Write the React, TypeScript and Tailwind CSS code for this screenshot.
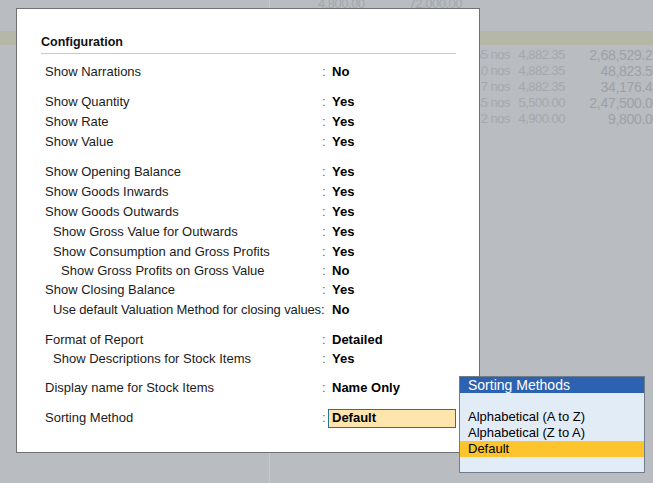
const reportRows = [
  { qty: "55 nos", rate: "4,882.35", amount: "2,68,529.25" },
  { qty: "10 nos", rate: "4,882.35", amount: "48,823.50" },
  { qty: "7 nos", rate: "4,882.35", amount: "34,176.45" },
  { qty: "45 nos", rate: "5,500.00", amount: "2,47,500.00" },
  { qty: "2 nos", rate: "4,900.00", amount: "9,800.00" },
];

type ConfigRow = { label: string; value: string; indent?: number; gap?: string; h?: string; box?: boolean; inlineColon?: boolean };

const configRows: ConfigRow[] = [
  { label: "Show Narrations", value: "No" },
  { label: "Show Quantity", value: "Yes", gap: "mt-[10px]" },
  { label: "Show Rate", value: "Yes" },
  { label: "Show Value", value: "Yes" },
  { label: "Show Opening Balance", value: "Yes", gap: "mt-[10px]" },
  { label: "Show Goods Inwards", value: "Yes" },
  { label: "Show Goods Outwards", value: "Yes" },
  { label: "Show Gross Value for Outwards", value: "Yes", indent: 1 },
  { label: "Show Consumption and Gross Profits", value: "Yes", indent: 1, h: "h-[19px]" },
  { label: "Show Gross Profits on Gross Value", value: "No", indent: 2, h: "h-[19px]" },
  { label: "Show Closing Balance", value: "Yes" },
  { label: "Use default Valuation Method for closing values:", value: "No", indent: 1, inlineColon: true },
  { label: "Format of Report", value: "Detailed", gap: "mt-[10px]", h: "h-[19px]" },
  { label: "Show Descriptions for Stock Items", value: "Yes", indent: 1 },
  { label: "Display name for Stock Items", value: "Name Only", gap: "mt-[9px]" },
  { label: "Sorting Method", value: "Default", gap: "mt-[10px]", box: true },
];

function Row({ row }: { row: ConfigRow }) {
  const indent = row.indent === 2 ? "pl-4" : row.indent === 1 ? "pl-2" : "";
  return (
    <div className={`flex items-center ${row.h ?? "h-5"} ${row.gap ?? ""}`}>
      <div
        className={`w-[277px] shrink-0 whitespace-nowrap text-[13px] text-[#1b1b1b] ${indent} ${
          row.inlineColon ? "tracking-[-0.12px]" : ""
        }`}
      >
        {row.label}
      </div>
      <div className={`${row.box ? "w-[6px]" : "w-[10px]"} shrink-0 text-[13px] text-[#666]`}>{row.inlineColon ? "" : ":"}</div>
      {row.box ? (
        <div className="flex h-[19px] w-[128px] items-center border border-[#2f7189] bg-[#fee5ae] pl-[3px] text-[13px] font-bold text-black">
          {row.value}
        </div>
      ) : (
        <div className="text-[13px] font-bold text-black">{row.value}</div>
      )}
    </div>
  );
}

function Divider() {
  return <div className="h-full w-[270px] shrink-0 border-r border-[#c6c9cd]" />;
}

export default function App() {
  return (
    <div className="relative h-[483px] w-[653px] overflow-hidden bg-[#b9bcc1] font-['Liberation_Sans',Arial,sans-serif]">
      {/* dimmed report behind the dialog */}
      <div className="flex flex-col text-[13px] tracking-[-0.5px] text-[#a4a8ad]">
        <div className="-mt-[4px] flex h-4 items-center leading-4">
          <Divider />
          <span className="w-[12px] shrink-0" />
          <span className="w-[36px] shrink-0">15 nos</span>
          <span className="w-[50px] shrink-0">4,800.00</span>
          <span className="w-[94px] shrink-0 text-right">72,000.00</span>
        </div>
        <div className="flex h-[19px]">
          <Divider />
        </div>
        <div className="h-[14px] bg-[#b5b8a6]" />
        <div className="flex h-[2px]">
          <Divider />
        </div>
        {reportRows.map((r) => (
          <div key={r.qty} className="flex h-4 items-center leading-4">
            <Divider />
            <span className="w-[240px] shrink-0 text-right">{r.qty}</span>
            <span className="w-[55px] shrink-0 text-right">{r.rate}</span>
            <span className="w-[95px] shrink-0 text-right text-[14px] tracking-[-0.3px] text-[#9da1a6]">{r.amount}</span>
          </div>
        ))}
        <div className="flex h-[400px]">
          <Divider />
        </div>
      </div>

      {/* configuration dialog */}
      <div className="absolute left-[16px] top-[8px] h-[445px] w-[464px] border border-[#707070] bg-white">
        <div className="ml-[24px] mr-[23px] mt-[25px] border-b border-[#c8c8c8] pb-[3px] text-[12.5px] font-bold leading-4 text-[#111]">
          Configuration
        </div>
        <div className="ml-[28px] mt-[8px] flex flex-col">
          {configRows.map((row) => (
            <Row key={row.label} row={row} />
          ))}
        </div>
      </div>

      {/* sorting method list */}
      <div className="absolute left-[459px] top-[376px] w-[186px] border border-[#6f7d8b] bg-[#e1ecf7]">
        <div className="h-4 bg-[#2d62b0] pl-2 text-[14px] leading-4 text-white">Sorting Methods</div>
        <div className="h-4" />
        <div className="h-4 pl-2 text-[13px] leading-4 text-black">Alphabetical (A to Z)</div>
        <div className="h-4 pl-2 text-[13px] leading-4 text-black">Alphabetical (Z to A)</div>
        <div className="h-4 bg-[#fec42e] pl-2 text-[13px] leading-4 text-black">Default</div>
        <div className="h-[15px]" />
      </div>
    </div>
  );
}
